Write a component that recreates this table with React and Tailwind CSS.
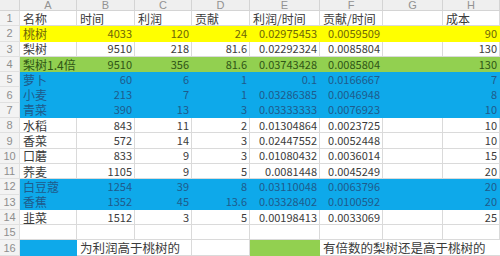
const cols = ["A", "B", "C", "D", "E", "F", "G", "H"];

const fills = {
  w: "bg-white text-[#3b3b3b] border-[#dadada]",
  y: "bg-[#ffff00] text-[#6e6608] border-[#ffff00]",
  g: "bg-[#92d050] text-[#2f5516] border-[#92d050]",
  b: "bg-[#0ea9ea] text-[#1f5b8c] border-[#0ea9ea]",
};

const data = [
  ["w", ["名称", "时间", "利润", "贡献", "利润/时间", "贡献/时间", "", "成本"]],
  ["y", ["桃树", 4033, 120, 24, "0.02975453", "0.0059509", "", 90]],
  ["w", ["梨树", 9510, 218, 81.6, "0.02292324", "0.0085804", "", 130]],
  ["g", ["梨树1.4倍", 9510, 356, 81.6, "0.03743428", "0.0085804", "", 130]],
  ["b", ["萝卜", 60, 6, 1, "0.1", "0.0166667", "", 7]],
  ["b", ["小麦", 213, 7, 1, "0.03286385", "0.0046948", "", 8]],
  ["b", ["青菜", 390, 13, 3, "0.03333333", "0.0076923", "", 10]],
  ["w", ["水稻", 843, 11, 2, "0.01304864", "0.0023725", "", 10]],
  ["w", ["香菜", 572, 14, 3, "0.02447552", "0.0052448", "", 10]],
  ["w", ["口蘑", 833, 9, 3, "0.01080432", "0.0036014", "", 15]],
  ["w", ["荞麦", 1105, 9, 5, "0.0081448", "0.0045249", "", 20]],
  ["b", ["白豆蔻", 1254, 39, 8, "0.03110048", "0.0063796", "", 20]],
  ["b", ["香蕉", 1352, 45, 13.6, "0.03328402", "0.0100592", "", 20]],
  ["w", ["韭菜", 1512, 3, 5, "0.00198413", "0.0033069", "", 25]],
  ["w", ["", "", "", "", "", "", "", ""]],
];

function Cell({ fill, value }) {
  const isNum = typeof value === "number" || /^[0-9.]+$/.test(String(value));
  return (
    <div
      className={`border-r border-b whitespace-nowrap flex items-center leading-[13px] ${fills[fill]} ${
        isNum ? "justify-end pr-[2px] text-[11px]" : "justify-start pl-[3px] text-[12px]"
      }`}
    >
      {value === "" ? null : <span>{String(value)}</span>}
    </div>
  );
}

function RowNum({ n }) {
  return (
    <div
      className="bg-[#f3f3f3] border-r border-b border-[#e0e0e0] text-[#8e8e8e] text-[11px] leading-[12px] flex items-center justify-center"
      style={{ fontFamily: '"Liberation Sans", sans-serif' }}
    >
      {n}
    </div>
  );
}

export default function App() {
  return (
    <div
      className="w-[500px] h-[256px] bg-white overflow-hidden"
      style={{ fontFamily: '"Noto Sans CJK SC", "Noto Sans", sans-serif' }}
    >
      <div className="grid grid-cols-[20px_57px_58px_57px_58px_70px_63px_60px_57px] grid-rows-[11px_repeat(16,15.3px)]">
        {/* column header */}
        <div className="bg-[#efefef] border-r border-b border-[#d4d4d4]" />
        {cols.map((c) => (
          <div
            key={c}
            className="bg-[#efefef] border-r border-b border-[#d4d4d4] text-[#929292] text-[11px] leading-[10px] flex items-center justify-center"
            style={{ fontFamily: '"Liberation Sans", sans-serif' }}
          >
            {c}
          </div>
        ))}

        {data.map(([fill, cells], i) => [
          <RowNum key={"n" + i} n={i + 1} />,
          ...cells.map((v, j) => <Cell key={i + "-" + j} fill={fill} value={v} />),
        ])}

        {/* row 16 legend */}
        <RowNum n={16} />
        <div className="bg-[#0ea9ea] border-r border-b border-[#0ea9ea]" />
        <div className="col-span-2 bg-white border-r border-b border-[#dadada] text-[#3b3b3b] text-[12.5px] leading-[13px] flex items-center pl-[3px] whitespace-nowrap">
          为利润高于桃树的
        </div>
        <div className="bg-white border-r border-b border-[#dadada]" />
        <div className="bg-[#92d050] border-r border-b border-[#92d050]" />
        <div className="col-span-3 bg-white border-b border-[#dadada] text-[#3b3b3b] text-[12.5px] leading-[13px] flex items-center pl-[3px] whitespace-nowrap">
          有倍数的梨树还是高于桃树的
        </div>
      </div>
    </div>
  );
}
